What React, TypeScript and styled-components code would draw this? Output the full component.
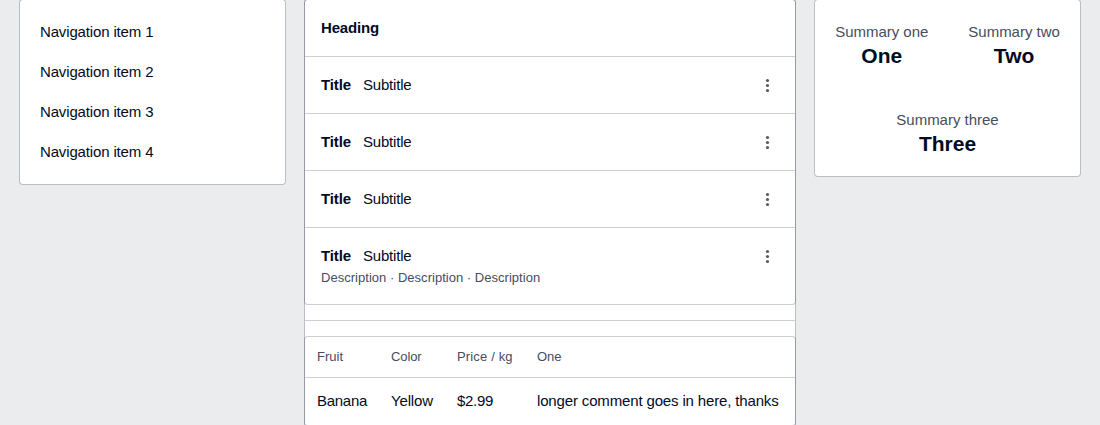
import React from "react";
import styled, { createGlobalStyle } from "styled-components";

const line = "rgba(0, 11, 36, 0.2)";
const ink = "#000b24";
const muted = "#474d5e";

const GlobalStyle = createGlobalStyle`
  *, *::before, *::after { box-sizing: border-box; }
  body {
    margin: 0;
    background: #ebecee;
    color: ${ink};
    font: 15px/24px "Liberation Sans", Arial, sans-serif;
  }
`;

const Page = styled.main`
  display: grid;
  grid-template-columns: 265px 490px 265px;
  column-gap: 20px;
  align-items: start;
  height: 425px;
  padding: 0 20px;
  overflow: hidden;
`;

const Card = styled.section`
  background: #fff;
  border-radius: 3px;
  box-shadow: 0 0 0 1px ${line};
`;

const Nav = styled.nav`
  display: flex;
  flex-direction: column;
  padding: 12px 0;
`;

const NavItem = styled.a`
  padding: 8px 20px;
  letter-spacing: -0.15px;
`;

const Column = styled(Card)`
  height: 445px;
`;

const Heading = styled.h2`
  margin: 0;
  padding: 16px;
  font-size: 15px;
  line-height: 24px;
  letter-spacing: -0.15px;
`;

const Row = styled.div`
  display: flex;
  justify-content: space-between;
  align-items: flex-start;
  border-top: 1px solid ${line};
  padding: 16px;
`;

const TitleLine = styled.div`
  display: grid;
  grid-template-columns: 30px auto;
  column-gap: 12px;
`;

const Title = styled.strong`
  letter-spacing: -0.1px;
`;

const Subtitle = styled.span`
  letter-spacing: -0.2px;
`;

const Description = styled.div`
  color: ${muted};
  font-size: 13px;
  line-height: 20px;
  letter-spacing: 0.025px;
`;

const MenuButton = styled.button`
  display: flex;
  width: 24px;
  height: 24px;
  padding: 0;
  border: 0;
  background: none;
  color: #555b6a;
`;

const Divider = styled.hr`
  height: 1px;
  margin: 16px 0;
  border: 0;
  background: ${line};
`;

const Table = styled.table`
  width: 100%;
  table-layout: fixed;
  border-collapse: separate;
  border-spacing: 0;
  white-space: nowrap;
`;

const Th = styled.th<{ $width?: number; $tracking?: number }>`
  width: ${({ $width }) => ($width ? `${$width}px` : "auto")};
  height: 41px;
  padding: 0 12px;
  border-bottom: 1px solid ${line};
  color: ${muted};
  font-size: 13px;
  line-height: 20px;
  font-weight: normal;
  text-align: left;
  letter-spacing: ${({ $tracking = 0 }) => $tracking}px;
`;

const Td = styled.td<{ $tracking: number }>`
  height: 47px;
  padding: 0 12px 1px;
  letter-spacing: ${({ $tracking }) => $tracking}px;
`;

const Summary = styled(Card)`
  display: flex;
  flex-wrap: wrap;
  justify-content: center;
`;

const SummaryItem = styled.div`
  padding: 20px;
  text-align: center;
`;

const Label = styled.div`
  color: ${muted};
  letter-spacing: -0.02px;
`;

const Value = styled.div`
  font-size: 21px;
  font-weight: bold;
`;

const rows = [{}, {}, {}, { description: "Description · Description · Description" }] as {
  description?: string;
}[];

const summaries = [
  ["Summary one", "One"],
  ["Summary two", "Two"],
  ["Summary three", "Three"],
];

const MoreIcon = () => (
  <svg width="24" height="24" viewBox="0 0 24 24" fill="currentColor">
    <circle cx="12.5" cy="7.5" r="1.6" />
    <circle cx="12.5" cy="12.5" r="1.6" />
    <circle cx="12.5" cy="17.5" r="1.6" />
  </svg>
);

const ListRow = ({ description }: { description?: string }) => (
  <Row>
    <div>
      <TitleLine>
        <Title>Title</Title>
        <Subtitle>Subtitle</Subtitle>
      </TitleLine>
      {description && <Description>{description}</Description>}
    </div>
    <MenuButton aria-label="More">
      <MoreIcon />
    </MenuButton>
  </Row>
);

export default function App() {
  return (
    <>
      <GlobalStyle />
      <Page>
        <Card>
          <Nav>
            {[1, 2, 3, 4].map((n) => (
              <NavItem key={n}>Navigation item {n}</NavItem>
            ))}
          </Nav>
        </Card>
        <Column>
          <Card>
            <Heading>Heading</Heading>
            {rows.map((row, i) => (
              <ListRow key={i} {...row} />
            ))}
          </Card>
          <Divider />
          <Card>
            <Table>
              <thead>
                <tr>
                  <Th $width={74}>Fruit</Th>
                  <Th $width={66} $tracking={-0.1}>Color</Th>
                  <Th $width={80} $tracking={0.15}>Price / kg</Th>
                  <Th>One</Th>
                </tr>
              </thead>
              <tbody>
                <tr>
                  <Td $tracking={-0.28}>Banana</Td>
                  <Td $tracking={-0.15}>Yellow</Td>
                  <Td $tracking={-0.3}>$2.99</Td>
                  <Td $tracking={-0.15}>longer comment goes in here, thanks</Td>
                </tr>
              </tbody>
            </Table>
          </Card>
        </Column>
        <Summary>
          {summaries.map(([label, value]) => (
            <SummaryItem key={label}>
              <Label>{label}</Label>
              <Value>{value}</Value>
            </SummaryItem>
          ))}
        </Summary>
      </Page>
    </>
  );
}
